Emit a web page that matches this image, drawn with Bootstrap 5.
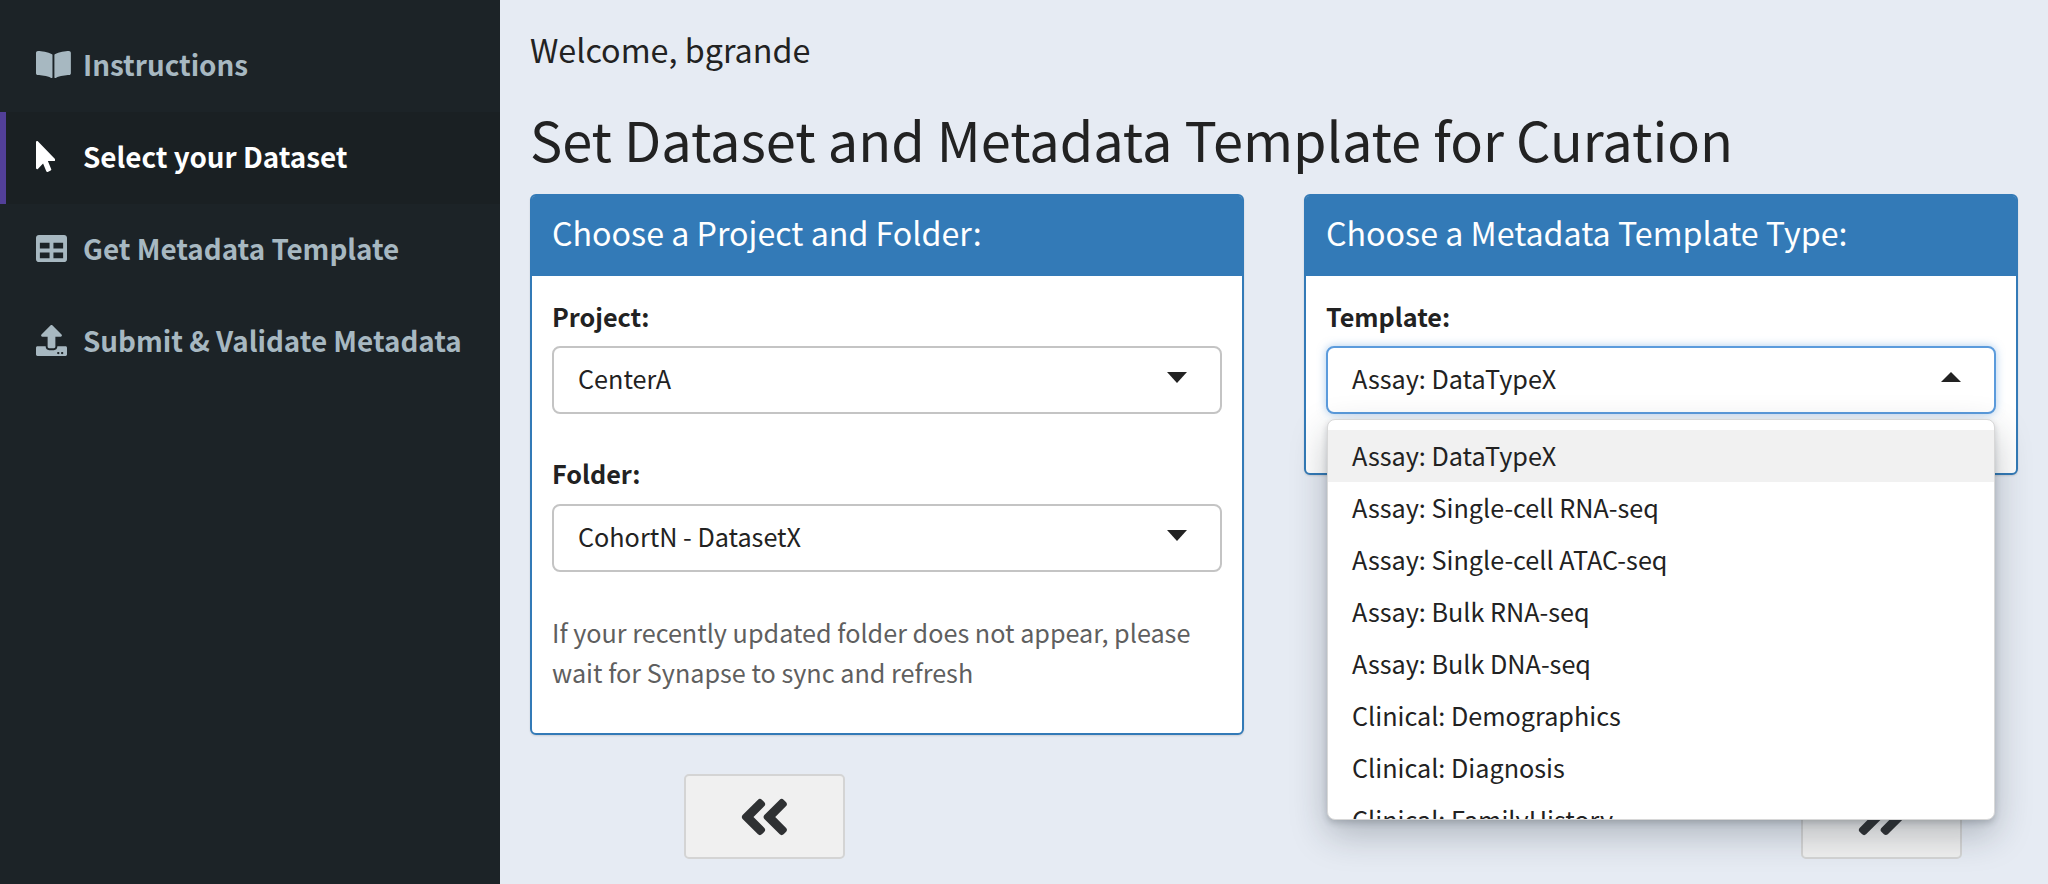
<!DOCTYPE html>
<html lang="en">
<head>
<meta charset="utf-8">
<title>Curator</title>
<link rel="stylesheet" href="https://cdn.jsdelivr.net/npm/bootstrap@5.3.0/dist/css/bootstrap.min.css">
<style>
html, body { height: 884px; overflow: hidden; }
body { font-family: "Noto Sans CJK SC", "Noto Sans", sans-serif; font-size: 25.2px; line-height: 40px; color: #222; background: #e6ebf3; }
.side-rail { width: 500px; height: 884px; background: #1c2327; padding-top: 20px; flex: none; }
.rail-item { height: 92px; padding-left: 36px; padding-bottom: 4px; color: #a7b8c1; font-weight: 700; font-size: 27.8px; }
.rail-item svg { height: 31px; fill: currentColor; flex: none; display: block; }
.rail-icon { width: 47px; flex: none; }
.rail-item.is-on { background: #1a2023; color: #fff; border-left: 6px solid #523f98; padding-left: 30px; }
.main-pane { padding: 29px 30px 0 30px; }
.hello { font-size: 32.3px; line-height: 40px; margin-bottom: 0; }
.page-title { font-size: 54.1px; line-height: 70px; font-weight: 400; margin: 35px 0 20px; }
.cards-row { --bs-gutter-x: 60px; }
.panel { border: 2px solid #337ab7; border-radius: 6px; background: #fff; box-shadow: 0 1px 2px rgba(0,0,0,.12); }
.panel .card-header { background: #337ab7; color: #fff; border: 0; border-radius: 3px 3px 0 0; height: 80px; padding: 0 20px; font-size: 32.2px; line-height: 72px; }
.panel .card-body { padding: 0 20px; }
.field-label { font-weight: 700; font-size: 25.2px; line-height: 40px; display: block; margin: 20px 0 10px; }
.fake-select { height: 68px; border: 2px solid #c4c4c4; border-radius: 8px; background: #fff; padding: 0 24px; line-height: 61px; font-size: 25.2px; position: relative; }
.fake-select::after { content: ""; position: absolute; right: 33px; top: 24px; border-style: solid; border-width: 11px 10px 0; border-color: #222 transparent transparent; }
.fake-select.is-open { border-color: #5b9bdc; box-shadow: 0 0 8px rgba(91,155,220,.5); }
.fake-select.is-open::after { border-width: 0 10px 10px; border-color: transparent transparent #222; top: 24px; }
.second-field { margin-top: 39px; }
.second-field .field-label { margin-bottom: 11px; }
.help-note { color: #5f5f5f; font-size: 25.2px; line-height: 40px; margin: 40px 0 41px; }
.short-panel { height: 281px; }
.drop-list { position: absolute; left: 1327px; top: 419px; width: 668px; height: 401px; background: #fff; border: 1px solid #d8d8d8; border-radius: 8px; overflow: hidden; padding: 10px 0 0; z-index: 5; box-shadow: 0 3px 6px rgba(30,40,50,.2), 0 14px 36px rgba(30,40,50,.28); font-size: 25.2px; }
.drop-list div { height: 52px; line-height: 50px; padding: 0 24px; white-space: nowrap; }
.drop-list .is-hover { background: #f1f1f1; }
.nav-btn { width: 161px; height: 85px; background: #f0f0f0; border: 2px solid #d4d4d4; border-radius: 5px; padding: 0; color: #2f3133; }
.nav-btn svg { height: 58px; fill: currentColor; display: block; margin: 0 auto; }
.btn-row { margin-top: 39px; padding-left: 154px; padding-right: 56px; }
</style>
</head>
<body class="d-flex">
<nav class="side-rail d-flex flex-column">
  <div class="rail-item d-flex align-items-center"><span class="rail-icon"><svg viewBox="0 0 576 512"><path d="M542.22 32.05c-54.8 3.11-163.72 14.43-230.96 55.59-4.64 2.84-7.27 7.89-7.27 13.17v363.87c0 11.55 12.63 18.85 23.28 13.49 69.18-34.82 169.23-44.32 218.7-46.92 16.89-.89 30.02-14.43 30.02-30.66V62.75c.01-17.71-15.35-31.74-33.77-30.7zM264.73 87.64C197.5 46.48 88.58 35.17 33.78 32.05 15.36 31.01 0 45.04 0 62.75V400.6c0 16.24 13.13 29.78 30.02 30.66 49.49 2.6 149.59 12.11 218.77 46.95 10.62 5.35 23.21-1.94 23.21-13.46V100.63c0-5.29-2.62-10.25-7.27-12.99z"/></svg></span>Instructions</div>
  <div class="rail-item is-on d-flex align-items-center"><span class="rail-icon"><svg viewBox="0 0 320 512"><path d="M302.189 329.126H196.105l55.831 135.993c3.889 9.428-.555 19.999-9.444 23.999l-49.165 21.427c-9.165 4-19.443-.571-23.332-9.714l-53.053-129.136-86.664 89.138C18.729 472.71 0 463.554 0 447.977V18.299C0 1.899 19.921-6.096 30.277 5.443l284.412 292.542c11.472 11.179 3.007 31.141-12.5 31.141z"/></svg></span>Select your Dataset</div>
  <div class="rail-item d-flex align-items-center"><span class="rail-icon"><svg viewBox="0 0 512 512"><path d="M464 32H48C21.49 32 0 53.49 0 80v352c0 26.51 21.49 48 48 48h416c26.51 0 48-21.49 48-48V80c0-26.51-21.49-48-48-48zM224 416H64v-96h160v96zm0-160H64v-96h160v96zm224 160H288v-96h160v96zm0-160H288v-96h160v96z"/></svg></span>Get Metadata Template</div>
  <div class="rail-item d-flex align-items-center"><span class="rail-icon"><svg viewBox="0 0 512 512"><path d="M296 384h-80c-13.3 0-24-10.7-24-24V192h-87.7c-17.8 0-26.7-21.5-14.1-34.1L242.3 5.7c7.5-7.5 19.8-7.5 27.3 0l152.2 152.2c12.6 12.6 3.7 34.1-14.1 34.1H320v168c0 13.3-10.7 24-24 24zm216-8v112c0 13.3-10.7 24-24 24H24c-13.3 0-24-10.7-24-24V376c0-13.3 10.7-24 24-24h136v8c0 30.9 25.1 56 56 56h80c30.9 0 56-25.1 56-56v-8h136c13.3 0 24 10.7 24 24zm-124 88c0-11-9-20-20-20s-20 9-20 20 9 20 20 20 20-9 20-20zm64 0c0-11-9-20-20-20s-20 9-20 20 9 20 20 20 20-9 20-20z"/></svg></span>Submit &amp; Validate Metadata</div>
</nav>
<main class="main-pane flex-grow-1">
  <p class="hello">Welcome, bgrande</p>
  <h2 class="page-title">Set Dataset and Metadata Template for Curation</h2>
  <div class="row cards-row">
    <div class="col-6">
      <div class="card panel">
        <div class="card-header">Choose a Project and Folder:</div>
        <div class="card-body">
          <label class="field-label">Project:</label>
          <div class="fake-select">CenterA</div>
          <div class="second-field">
            <label class="field-label">Folder:</label>
            <div class="fake-select">CohortN - DatasetX</div>
          </div>
          <p class="help-note">If your recently updated folder does not appear, please wait for Synapse to sync and refresh</p>
        </div>
      </div>
    </div>
    <div class="col-6">
      <div class="card panel short-panel">
        <div class="card-header">Choose a Metadata Template Type:</div>
        <div class="card-body">
          <label class="field-label">Template:</label>
          <div class="fake-select is-open">Assay: DataTypeX</div>
        </div>
      </div>
    </div>
  </div>
  <div class="d-flex justify-content-between btn-row">
    <button class="btn nav-btn" type="button" aria-label="Back"><svg viewBox="0 0 448 512"><path d="M223.7 239l136-136c9.4-9.4 24.6-9.4 33.9 0l22.6 22.6c9.4 9.4 9.4 24.6 0 33.9L319.9 256l96.4 96.4c9.4 9.4 9.4 24.6 0 33.9L393.7 409c-9.4 9.4-24.6 9.4-33.9 0l-136-136c-9.5-9.4-9.5-24.6-.1-34zm-192 34l136 136c9.4 9.4 24.6 9.4 33.9 0l22.6-22.6c9.4-9.4 9.4-24.6 0-33.9L127.9 256l96.4-96.4c9.4-9.4 9.4-24.6 0-33.9L201.7 103c-9.4-9.4-24.6-9.4-33.9 0l-136 136c-9.5 9.4-9.5 24.6-.1 34z"/></svg></button>
    <button class="btn nav-btn" type="button" aria-label="Next"><svg viewBox="0 0 448 512"><path d="M224.3 273l-136 136c-9.4 9.4-24.6 9.4-33.9 0l-22.6-22.6c-9.4-9.4-9.4-24.6 0-33.9l96.4-96.4-96.4-96.4c-9.4-9.4-9.4-24.6 0-33.9L54.3 103c9.4-9.4 24.6-9.4 33.9 0l136 136c9.5 9.4 9.5 24.6.1 34zm192-34l-136-136c-9.4-9.4-24.6-9.4-33.9 0l-22.6 22.6c-9.4 9.4-9.4 24.6 0 33.9l96.4 96.4-96.4 96.4c-9.4 9.4-9.4 24.6 0 33.9l22.6 22.6c9.4 9.4 24.6 9.4 33.9 0l136-136c9.4-9.2 9.4-24.4 0-33.8z"/></svg></button>
  </div>
</main>
<div class="drop-list">
  <div class="is-hover">Assay: DataTypeX</div>
  <div>Assay: Single-cell RNA-seq</div>
  <div>Assay: Single-cell ATAC-seq</div>
  <div>Assay: Bulk RNA-seq</div>
  <div>Assay: Bulk DNA-seq</div>
  <div>Clinical: Demographics</div>
  <div>Clinical: Diagnosis</div>
  <div>Clinical: FamilyHistory</div>
</div>
<script src="https://cdn.jsdelivr.net/npm/bootstrap@5.3.0/dist/js/bootstrap.bundle.min.js"></script>
</body>
</html>
